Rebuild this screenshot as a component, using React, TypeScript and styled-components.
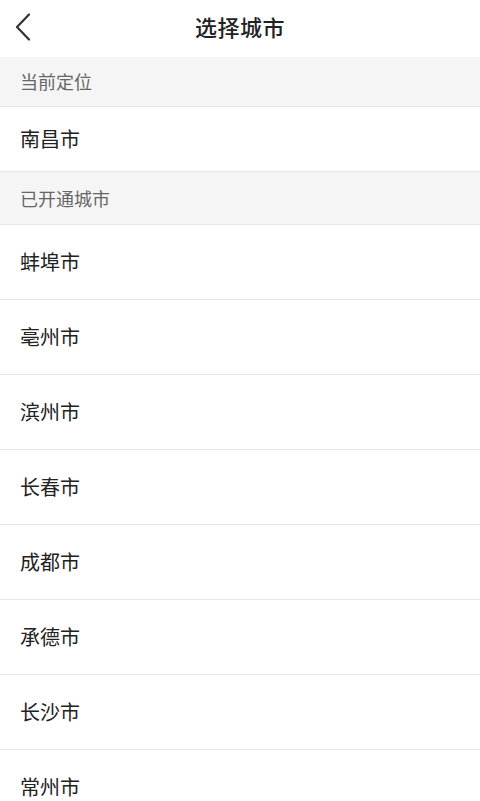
import React from 'react';
import styled, { createGlobalStyle } from 'styled-components';

const GlobalStyle = createGlobalStyle`
  html, body {
    margin: 0;
    padding: 0;
    background: #ffffff;
  }
  body {
    font-family: "Noto Sans CJK SC", "Noto Sans", sans-serif;
  }
`;

const Page = styled.div`
  width: 480px;
  height: 801px;
  overflow: hidden;
  background: #ffffff;
`;

const NavBar = styled.div`
  position: relative;
  height: 57px;
  box-sizing: border-box;
  padding-bottom: 5px;
  display: flex;
  align-items: center;
  justify-content: center;
  background: #ffffff;
`;

const BackButton = styled.button`
  position: absolute;
  left: 10px;
  top: 9px;
  width: 26px;
  height: 36px;
  padding: 0;
  border: none;
  background: none;
  display: flex;
  align-items: center;
  justify-content: center;
`;

const Title = styled.h1`
  margin: 0;
  font-size: 22px;
  line-height: 1;
  font-weight: 500;
  color: #222222;
  letter-spacing: 0.5px;
`;

const SectionHeader = styled.div<{ $height: number }>`
  height: ${(p) => p.$height}px;
  box-sizing: border-box;
  padding: 0 0 1px 20px;
  display: flex;
  align-items: center;
  background: #f5f5f5;
  border-bottom: 1px solid #e6e6e6;
  font-size: 18px;
  line-height: 1;
  color: #666666;
`;

const CityRow = styled.div<{ $height: number }>`
  height: ${(p) => p.$height}px;
  box-sizing: border-box;
  padding: 0 0 1px 20px;
  display: flex;
  align-items: center;
  background: #ffffff;
  border-bottom: 1px solid #e6e6e6;
  font-size: 20px;
  line-height: 1;
  color: #222222;
`;

const cities = ['蚌埠市', '亳州市', '滨州市', '长春市', '成都市', '承德市', '长沙市', '常州市'];

export default function App() {
  return (
    <Page>
      <GlobalStyle />
      <NavBar>
        <BackButton aria-label="返回">
          <svg width="18" height="28" viewBox="0 0 18 28" fill="none">
            <path d="M15 1.5L3 14L15 26.5" stroke="#333333" strokeWidth="2.2" strokeLinecap="round" strokeLinejoin="round" />
          </svg>
        </BackButton>
        <Title>选择城市</Title>
      </NavBar>
      <SectionHeader $height={50}>当前定位</SectionHeader>
      <CityRow $height={65}>南昌市</CityRow>
      <SectionHeader $height={53}>已开通城市</SectionHeader>
      {cities.map((c) => (
        <CityRow key={c} $height={75}>
          {c}
        </CityRow>
      ))}
    </Page>
  );
}
